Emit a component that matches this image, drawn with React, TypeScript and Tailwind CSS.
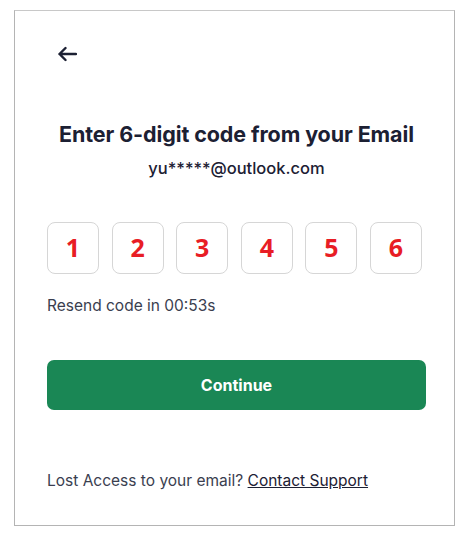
import React from 'react';

const digits = ['1', '2', '3', '4', '5', '6'];

function BackArrow() {
  return (
    <svg width="20" height="16" viewBox="0 0 20 16" fill="none" className="block">
      <path
        d="M19 8H2.5M8.5 2L2.5 8L8.5 14"
        stroke="#1c2033"
        strokeWidth="2.4"
        strokeLinecap="round"
        strokeLinejoin="round"
      />
    </svg>
  );
}

export default function App() {
  return (
    <div className="w-[471px] h-[537px] bg-white pt-[10px] pl-[14px] font-['Inter',sans-serif]">
      <div className="w-[441px] h-[516px] border border-[#b4b4b4] border-t-[#c8c8c8] pl-[32px] pr-[28px]">
        <div className="pt-[35px] pl-[10px]">
          <BackArrow />
        </div>

        <div className="mt-[57px] flex flex-col items-center">
          <h1 className="text-[21.5px] leading-[30px] font-bold text-[#1c2033] tracking-[-0.1px]">
            Enter 6-digit code from your Email
          </h1>
          <p className="mt-[8px] text-[16.5px] leading-[22px] font-medium text-[#1c2033]">
            yu*****@outlook.com
          </p>
        </div>

        <div className="mt-[43px] flex gap-[12.6px]">
          {digits.map((d) => (
            <div
              key={d}
              className="w-[52px] h-[52px] rounded-[8px] border border-[#d6d6d6] flex items-center justify-center"
            >
              <span className="text-[25px] font-bold text-[#e81d25] font-['Open_Sans',sans-serif]">
                {d}
              </span>
            </div>
          ))}
        </div>

        <p className="mt-[21px] text-[15.5px] leading-[22px] text-[#3a3e4f]">
          Resend code in 00:53s
        </p>

        <button className="mt-[43px] w-full h-[50px] rounded-[7px] bg-[#1a8755] text-white text-[16px] font-bold">
          Continue
        </button>

        <p className="mt-[60px] text-[15.5px] leading-[22px] text-[#3a3e4f]">
          Lost Access to your email?{' '}
          <a href="#" className="underline text-[#1c2033]">
            Contact Support
          </a>
        </p>
      </div>
    </div>
  );
}
